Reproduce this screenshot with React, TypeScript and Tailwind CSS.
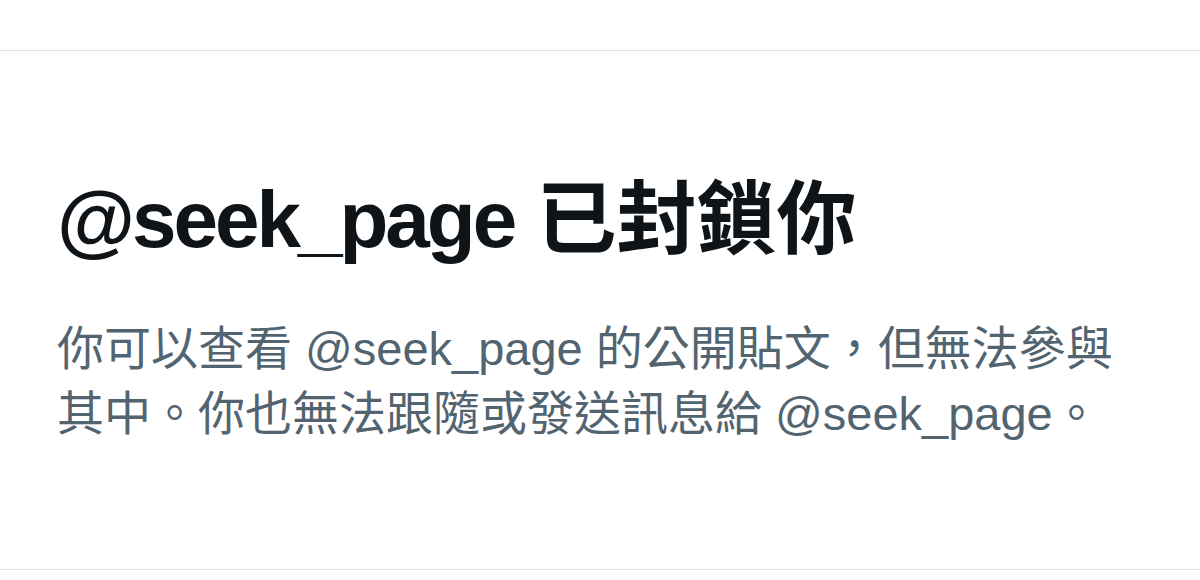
export default function App() {
  const font = {
    fontFamily: '"Liberation Sans", "Noto Sans CJK TC", sans-serif',
  };

  return (
    <div className="flex h-[580px] w-[1200px] flex-col bg-white" style={font}>
      <div className="h-[50px] shrink-0" />

      <div className="flex h-[520px] shrink-0 flex-col border-y border-[#e1e1e1] px-[57px] pt-[123px]">
        <h1 className="text-[80px] font-bold leading-[92px] text-[#0f1419]">
          <span className="tracking-[-3px]">@seek_page</span> 已封鎖你
        </h1>

        <p className="mt-[50px] text-[47px] leading-[65px] text-[#536471]">
          <span className="block">你可以查看 @seek_page 的公開貼文，但無法參與</span>
          <span className="block">其中。你也無法跟隨或發送訊息給 @seek_page。</span>
        </p>
      </div>
    </div>
  );
}
